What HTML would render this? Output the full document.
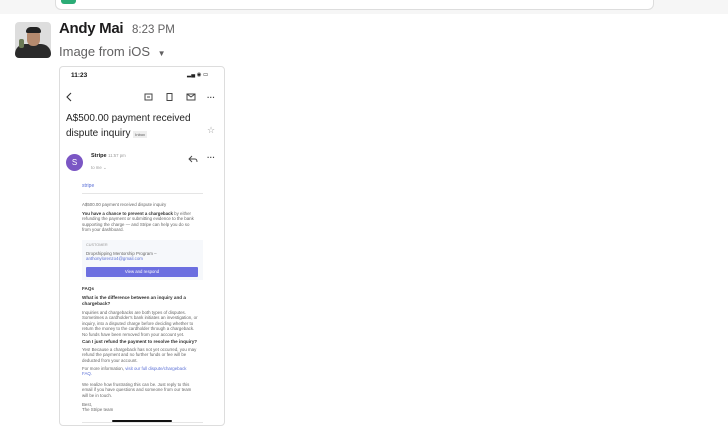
<!DOCTYPE html>
<html><head><meta charset="utf-8"><style>
*{margin:0;padding:0;box-sizing:border-box}
body{width:728px;height:439px;background:#fff;font-family:"Liberation Sans",sans-serif;position:relative;overflow:hidden}
.a{position:absolute;white-space:nowrap}
.t{font-size:4.4px;color:#666;line-height:5.4px}
.b{font-size:4.6px;color:#333;font-weight:bold;line-height:5.6px}
.l{color:#5a6fd6}
</style></head><body>
<div class="a" style="left:0;top:0;width:728px;height:14px;background:#f6f6f6"></div>
<div class="a" style="left:55px;top:-6px;width:599px;height:16px;background:#fff;border:1px solid #ddd;border-radius:6px"></div>
<div class="a" style="left:61px;top:0;width:15px;height:4px;background:#2bac76;border-radius:0 0 3px 3px"></div>

<div class="a" style="left:15px;top:22px;width:36px;height:36px;border-radius:4px;overflow:hidden;background:#ddd">
<div class="a" style="left:0;top:22px;width:36px;height:14px;background:#2a2a2a;border-radius:10px 10px 0 0"></div>
<div class="a" style="left:12px;top:7px;width:13px;height:17px;background:#b58a6e;border-radius:6px"></div>
<div class="a" style="left:11px;top:5px;width:15px;height:6px;background:#222;border-radius:6px 6px 2px 2px"></div>
<div class="a" style="left:4px;top:17px;width:5px;height:9px;background:#6b7a55;border-radius:2px"></div>
</div>
<div class="a" style="left:59px;top:20px;font-size:15px;font-weight:bold;color:#1d1c1d;letter-spacing:-0.3px">Andy Mai</div>
<div class="a" style="left:132px;top:24px;font-size:11.5px;color:#616061">8:23 PM</div>
<div class="a" style="left:59px;top:44px;font-size:13px;color:#616061">Image from iOS <span style="font-size:8px;margin-left:4px">▼</span></div>

<div class="a" style="left:59px;top:66px;width:166px;height:360px;border:1px solid #ddd;border-radius:4px;background:#fff"></div>
<div class="a" style="left:71px;top:72px;font-size:6.5px;font-weight:bold;color:#111">11:23</div>
<div class="a" style="left:187px;top:72px;font-size:5.5px;color:#222">▂▄ ◉ ▭</div>
<svg class="a" style="left:64px;top:90px" width="158" height="50">
<path d="M7 3 L3 7 L7 11" stroke="#333" stroke-width="1.1" fill="none"/>
<rect x="81" y="4" width="7" height="6" stroke="#444" stroke-width="1" fill="none"/><path d="M83 7 H86" stroke="#444" stroke-width="1"/>
<rect x="103" y="3.5" width="5" height="7" stroke="#444" stroke-width="1" fill="none"/>
<rect x="123" y="4" width="8" height="6" stroke="#444" stroke-width="1" fill="none"/><path d="M123 4 L127 7 L131 4" stroke="#444" stroke-width="1" fill="none"/>
<text x="143" y="10" font-size="8" font-weight="bold" fill="#444" font-family="Liberation Sans">···</text>
<text x="143" y="43" font-size="9" fill="#999" font-family="DejaVu Sans">☆</text>
</svg>
<div class="a" style="left:66px;top:111px;font-size:10px;color:#222;line-height:15px">A$500.00 payment received<br>dispute inquiry <span style="font-size:4px;background:#eee;padding:1px 2px;color:#555">Inbox</span></div>
<div class="a" style="left:66px;top:154px;width:17px;height:17px;border-radius:50%;background:#7b56c4;color:#fff;font-size:8px;text-align:center;line-height:17px">S</div>
<div class="a" style="left:91px;top:153px;font-size:5.5px;font-weight:bold;color:#222">Stripe <span style="font-weight:normal;color:#999;font-size:4.3px">11:57 pm</span></div>
<div class="a" style="left:91px;top:165px;font-size:4.3px;color:#999">to me ⌄</div>
<svg class="a" style="left:188px;top:155px" width="10" height="8"><path d="M4 1 L1 4 L4 7 M1 4 H7 Q9 4 9 7" stroke="#444" stroke-width=".9" fill="none"/></svg>
<div class="a" style="left:207px;top:153px;font-size:8px;font-weight:bold;color:#444">···</div>

<div class="a l" style="left:82px;top:183px;font-size:5px">stripe</div>
<div class="a" style="left:82px;top:193px;width:121px;height:1px;background:#e5e5e5"></div>
<div class="a t" style="left:82px;top:202px">A$500.00 payment received dispute inquiry</div>
<div class="a t" style="left:82px;top:211px"><b style="color:#333">You have a chance to prevent a chargeback</b> by either<br>refunding the payment or submitting evidence to the bank<br>supporting the charge — and Stripe can help you do so<br>from your dashboard.</div>
<div class="a" style="left:82px;top:240px;width:121px;height:40px;background:#f6f8fb"></div>
<div class="a t" style="left:86px;top:243px;font-size:3.8px;color:#999">CUSTOMER</div>
<div class="a t" style="left:86px;top:251px">Dropshipping Mentorship Program –<br><span class="l">anthonylorenzo4@gmail.com</span></div>
<div class="a" style="left:86px;top:267px;width:112px;height:10px;background:#6c6fe0;border-radius:1px;color:#fff;font-size:4.3px;text-align:center;line-height:10px">View and respond</div>
<div class="a b" style="left:82px;top:286px">FAQs</div>
<div class="a b" style="left:82px;top:295px">What is the difference between an inquiry and a<br>chargeback?</div>
<div class="a t" style="left:82px;top:310px">Inquiries and chargebacks are both types of disputes.<br>Sometimes a cardholder's bank initiates an investigation, or<br>inquiry, into a disputed charge before deciding whether to<br>return the money to the cardholder through a chargeback.<br>No funds have been removed from your account yet.</div>
<div class="a b" style="left:82px;top:339px">Can I just refund the payment to resolve the inquiry?</div>
<div class="a t" style="left:82px;top:347px">Yes! Because a chargeback has not yet occurred, you may<br>refund the payment and no further funds or fee will be<br>deducted from your account.</div>
<div class="a t" style="left:82px;top:366px">For more information, <span class="l">visit our full dispute/chargeback<br>FAQ.</span></div>
<div class="a t" style="left:82px;top:382px">We realize how frustrating this can be. Just reply to this<br>email if you have questions and someone from our team<br>will be in touch.</div>
<div class="a t" style="left:82px;top:402px">Best,<br>The Stripe team</div>
<div class="a" style="left:82px;top:422px;width:121px;height:1px;background:#e5e5e5"></div>
<div class="a" style="left:112px;top:420px;width:60px;height:2px;background:#111;border-radius:1px"></div>
</body></html>
